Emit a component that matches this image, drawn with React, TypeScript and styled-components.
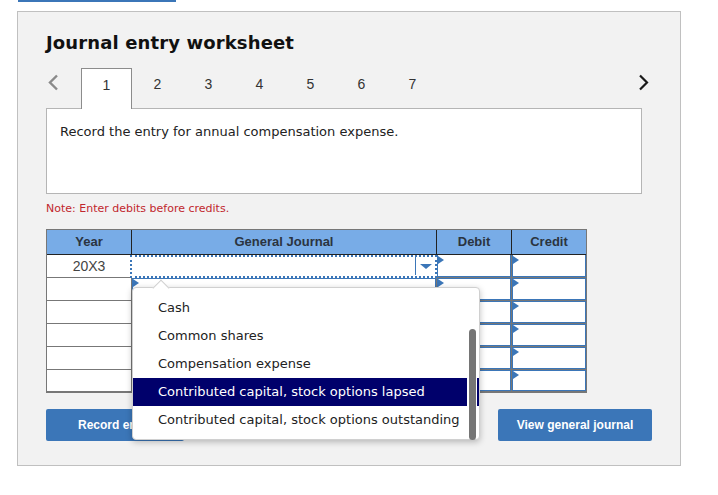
import React from 'react';
import styled, { createGlobalStyle } from 'styled-components';

const verdana = '"DejaVu Sans", Verdana, sans-serif';
const arial = '"Liberation Sans", Arial, sans-serif';
const blue = '#3b76b8';
const gridGrey = '#777';

const GlobalStyle = createGlobalStyle`
  html, body {
    margin: 0;
    padding: 0;
    background: #fff;
  }
`;

const TopBar = styled.div`
  width: 158px;
  height: 2px;
  margin-left: 18px;
  background: ${blue};
`;

const Panel = styled.section`
  box-sizing: border-box;
  width: 664px;
  height: 455px;
  margin: 9px 0 0 17px;
  padding: 20px 28px 0;
  background: #f2f2f2;
  border: 1px solid #c0c0c0;
`;

const Title = styled.h1`
  margin: 0;
  height: 36px;
  font: bold 18px/22px ${verdana};
  letter-spacing: 0.13px;
  color: #111;
`;

const TabRow = styled.div`
  display: flex;
  align-items: stretch;
  height: 41px;
  margin-bottom: -1px;
  position: relative;
  z-index: 1;
`;

const Arrow = styled.div<{ $wide?: boolean }>`
  display: flex;
  align-items: flex-start;
  padding: 6px 0 0 1px;
  width: 34px;
  margin-left: ${(p) => (p.$wide ? 'auto' : '0')};
  justify-content: ${(p) => (p.$wide ? 'flex-end' : 'flex-start')};
  margin-right: ${(p) => (p.$wide ? '2px' : '0')};
`;

const Tab = styled.div<{ $active?: boolean }>`
  box-sizing: border-box;
  width: 51px;
  padding-top: 8px;
  text-align: center;
  font: 14px/16px ${arial};
  color: #333;
  ${(p) =>
    p.$active &&
    `
    background: #fff;
    border: 1px solid #8c8c8c;
    border-bottom: none;
  `}
`;

const Prompt = styled.div`
  box-sizing: border-box;
  width: 596px;
  height: 86px;
  padding: 15px 13px;
  background: #fff;
  border: 1px solid #b5b5b5;
  font: 13px/16px ${verdana};
  color: #222;
`;

const Note = styled.p`
  margin: 8px 0 14px;
  font: 11px/13px ${verdana};
  color: #c1272d;
`;

const Stage = styled.div`
  position: relative;
`;

const Grid = styled.div`
  box-sizing: border-box;
  display: grid;
  grid-template-columns: 85px 305px 75px 74px;
  grid-template-rows: 25px repeat(5, 23px) 21px;
  width: 541px;
  border-top: 1px solid ${gridGrey};
  border-left: 1px solid ${gridGrey};
  border-right: 1px solid ${gridGrey};
  border-bottom: 2px solid ${gridGrey};
`;

const HeadCell = styled.div<{ $last?: boolean }>`
  box-sizing: border-box;
  display: flex;
  align-items: center;
  justify-content: center;
  background: #78ace7;
  border-bottom: 1px solid #222;
  border-right: ${(p) => (p.$last ? 'none' : '1px solid #222')};
  font: bold 13px/16px ${arial};
  color: #2b3440;
`;

const YearCell = styled.div<{ $last?: boolean }>`
  box-sizing: border-box;
  padding-top: 3px;
  text-align: center;
  background: #fff;
  border-right: 1px solid ${gridGrey};
  border-bottom: ${(p) => (p.$last ? 'none' : `1px solid ${gridGrey}`)};
  font: 14px/16px ${arial};
  color: #444;
`;

const EntryCell = styled.div<{ $last?: boolean; $first?: boolean; $edge?: boolean }>`
  box-sizing: border-box;
  position: relative;
  background: #fff;
  border-right: ${(p) => (p.$edge ? 'none' : `1px solid ${gridGrey}`)};
  border-bottom: ${(p) => (p.$last ? 'none' : `1px solid ${gridGrey}`)};
  box-shadow: inset 1px ${(p) => (p.$first ? '0' : '1px')} 0 ${blue},
    inset -1px -1px 0 ${blue};

  &::before {
    content: '';
    position: absolute;
    top: 1px;
    left: 1px;
    border-left: 6px solid ${blue};
    border-top: 4px solid transparent;
    border-bottom: 4px solid transparent;
  }
`;

const ActiveCell = styled.div`
  box-sizing: border-box;
  display: flex;
  justify-content: flex-end;
  background: #fff;
  border: 2px dotted ${blue};
  margin-left: -2px;
`;

const Caret = styled.div`
  box-sizing: content-box;
  width: 19px;
  height: 18px;
  border-left: 1px solid ${blue};
  display: flex;
  align-items: center;
  justify-content: center;

  &::after {
    content: '';
    border-top: 5px solid ${blue};
    border-left: 6px solid transparent;
    border-right: 6px solid transparent;
  }
`;

const Menu = styled.ul`
  box-sizing: border-box;
  position: absolute;
  top: 58px;
  left: 86px;
  width: 348px;
  height: 153px;
  margin: 0;
  padding: 6px 0 0;
  list-style: none;
  background: #fff;
  border: 1px solid #d0d0d0;
  border-radius: 4px;
  box-shadow: 0 2px 6px rgba(0, 0, 0, 0.25);
  z-index: 3;

  &::before {
    content: '';
    position: absolute;
    top: -6px;
    left: 22px;
    width: 11px;
    height: 11px;
    background: #fff;
    border-top: 1px solid #d0d0d0;
    border-left: 1px solid #d0d0d0;
    transform: rotate(45deg);
  }
`;

const MenuItem = styled.li<{ $selected?: boolean }>`
  position: relative;
  height: 28px;
  padding-left: 25px;
  font: normal 13px/28px ${verdana};
  color: ${(p) => (p.$selected ? '#fff' : '#222')};
  background: ${(p) => (p.$selected ? '#00006b' : 'transparent')};
  white-space: nowrap;
`;

const ScrollGutter = styled.div`
  position: absolute;
  top: 90px;
  right: 2px;
  width: 10px;
  height: 28px;
  background: #fff;
`;

const ScrollThumb = styled.div`
  position: absolute;
  top: 41px;
  right: 3px;
  width: 7px;
  height: 111px;
  background: #757575;
  border-radius: 4px;
`;

const Actions = styled.div`
  display: flex;
  justify-content: space-between;
  width: 606px;
  margin-top: 16px;
`;

const ActionButton = styled.button<{ $width: number }>`
  width: ${(p) => p.$width}px;
  height: 32px;
  padding: 0;
  background: ${blue};
  border: none;
  border-radius: 2px;
  font: bold 12px/16px ${arial};
  color: #fff;
`;

const rows = ['20X3', '', '', '', '', ''];

export default function App() {
  return (
    <>
      <GlobalStyle />
      <TopBar />
      <Panel>
        <Title>Journal entry worksheet</Title>
        <TabRow>
          <Arrow>
            <svg width="12" height="17" viewBox="0 0 12 17">
              <path d="M10 1.5 3 8.5l7 7" fill="none" stroke="#8a8a8a" strokeWidth="2.4" />
            </svg>
          </Arrow>
          <Tab $active>1</Tab>
          <Tab>2</Tab>
          <Tab>3</Tab>
          <Tab>4</Tab>
          <Tab>5</Tab>
          <Tab>6</Tab>
          <Tab>7</Tab>
          <Arrow $wide>
            <svg width="12" height="17" viewBox="0 0 12 17">
              <path d="M2 1.5l7 7-7 7" fill="none" stroke="#1a1a1a" strokeWidth="2.2" />
            </svg>
          </Arrow>
        </TabRow>
        <Prompt>Record the entry for annual compensation expense.</Prompt>
        <Note>Note: Enter debits before credits.</Note>
        <Stage>
          <Grid>
            <HeadCell>Year</HeadCell>
            <HeadCell>General Journal</HeadCell>
            <HeadCell>Debit</HeadCell>
            <HeadCell $last>Credit</HeadCell>
            {rows.map((year, i) => {
              const first = i === 0;
              const last = i === rows.length - 1;
              return (
                <React.Fragment key={i}>
                  <YearCell $last={last}>{year}</YearCell>
                  {first ? (
                    <ActiveCell>
                      <Caret />
                    </ActiveCell>
                  ) : (
                    <EntryCell $last={last} />
                  )}
                  <EntryCell $first={first} $last={last} />
                  <EntryCell $first={first} $last={last} $edge />
                </React.Fragment>
              );
            })}
          </Grid>
          <Menu>
            <MenuItem>Cash</MenuItem>
            <MenuItem>Common shares</MenuItem>
            <MenuItem>Compensation expense</MenuItem>
            <MenuItem $selected>Contributed capital, stock options lapsed</MenuItem>
            <MenuItem>Contributed capital, stock options outstanding</MenuItem>
            <ScrollGutter />
            <ScrollThumb />
          </Menu>
          <Actions>
            <ActionButton $width={138}>Record entry</ActionButton>
            <ActionButton $width={154}>View general journal</ActionButton>
          </Actions>
        </Stage>
      </Panel>
    </>
  );
}
